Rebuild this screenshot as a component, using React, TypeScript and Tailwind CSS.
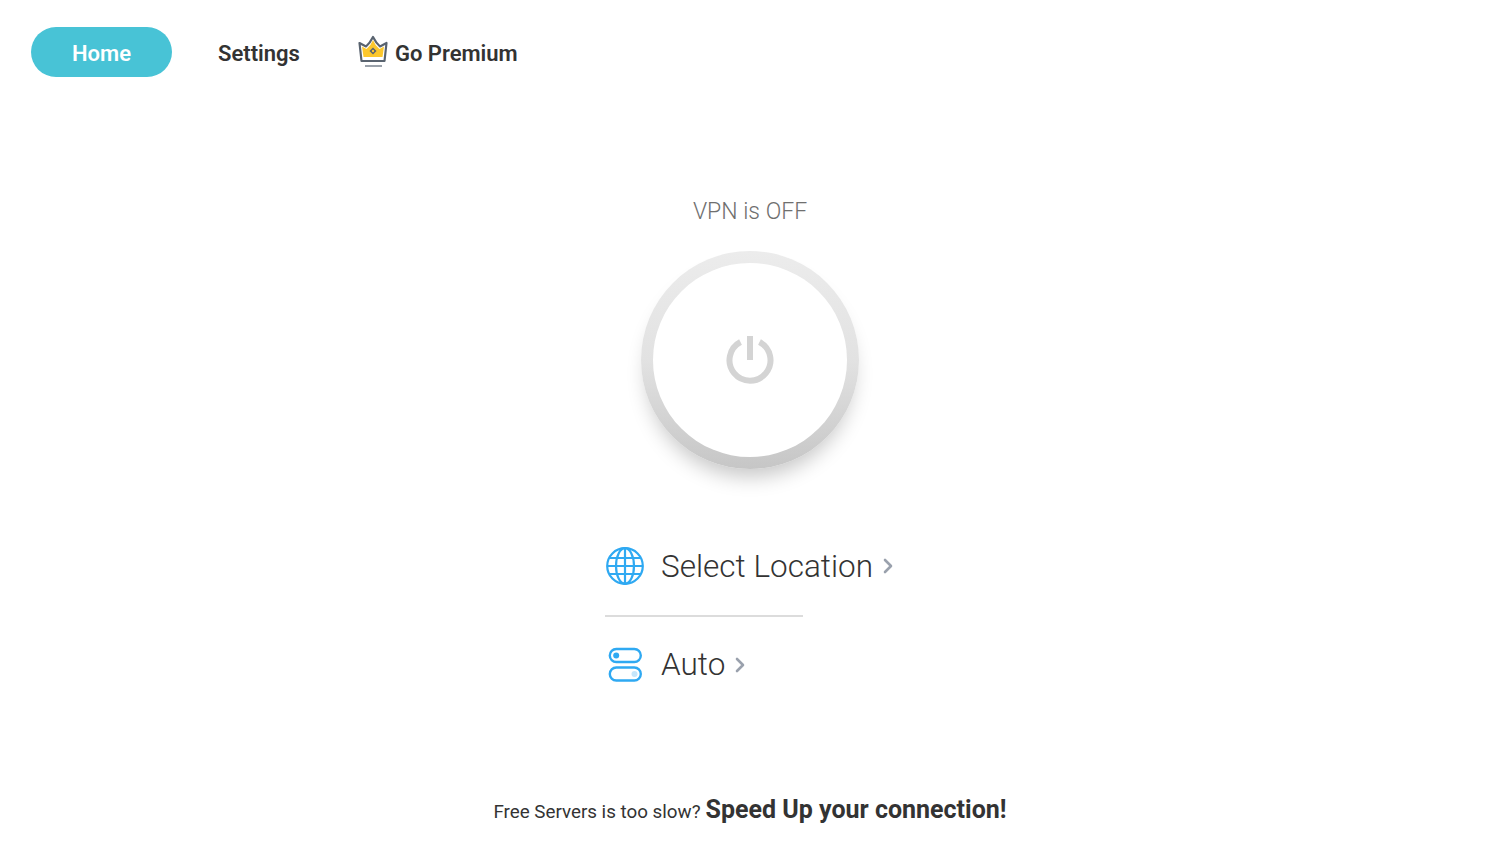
import { ChevronRight } from "lucide-react";

function CrownIcon() {
  return (
    <svg width="32" height="34" viewBox="0 0 32 34" fill="none" className="shrink-0">
      <path
        d="M2.5 8 L9 11.5 Q13 8 16 2 Q19 8 23 11.5 L29.5 8 L27.5 26 H4.5 Z"
        fill="#ffffff"
        stroke="#59636f"
        strokeWidth="2.2"
        strokeLinejoin="round"
      />
      <path d="M5 11.5 L9.5 14 Q14 10.5 16 5 Q18 10.5 22.5 14 L27 11.5 L25.5 22 H6.5 Z" fill="#fcc72c" />
      <path d="M8 31 H25" stroke="#9aa1aa" strokeWidth="2" />
      <path d="M16 12.5 L19.5 16 L16 19.5 L12.5 16 Z" fill="#59636f" />
      <circle cx="16" cy="16" r="1.2" fill="#fcc72c" />
    </svg>
  );
}

function PowerIcon() {
  return (
    <svg width="48" height="48" viewBox="0 0 48 48" fill="none" stroke="#d4d4d4">
      <path d="M14.5 6 A20.5 20.5 0 1 0 33.5 6" strokeWidth="6" />
      <path d="M24 0 V24" strokeWidth="6" />
    </svg>
  );
}

function GlobeIcon() {
  return (
    <svg width="40" height="40" viewBox="0 0 40 40" fill="none" stroke="#2fa9f2" strokeWidth="2.2" className="shrink-0">
      <circle cx="20" cy="20" r="17.8" />
      <ellipse cx="20" cy="20" rx="9" ry="17.8" />
      <path d="M20 2.2 V37.8 M2.2 20 H37.8 M4.5 12 H35.5 M4.5 28 H35.5" />
    </svg>
  );
}

function ServerIcon() {
  return (
    <svg width="40" height="40" viewBox="0 0 40 40" fill="none" className="shrink-0">
      <rect x="4.8" y="4" width="31" height="13" rx="6.5" stroke="#2fa9f2" strokeWidth="2.4" />
      <rect x="4.8" y="22.5" width="31" height="13" rx="6.5" stroke="#2fa9f2" strokeWidth="2.4" />
      <circle cx="11.2" cy="10.5" r="3" fill="#2fa9f2" />
      <circle cx="29.5" cy="29" r="3" fill="#c5e6fb" />
    </svg>
  );
}

export default function App() {
  return (
    <main className="h-[843px] bg-white flex flex-col text-[#333333] font-['Roboto',sans-serif] overflow-hidden">
      <nav className="flex items-center h-[50px] mt-[27px] ml-[31px]">
        <div className="w-[141px] h-[50px] rounded-full bg-[#48c3d6] text-white text-[22px] font-semibold flex items-center justify-center pt-[2px]">
          Home
        </div>
        <div className="ml-[46px] text-[22px] font-semibold pt-[2px]">Settings</div>
        <div className="ml-[57px] flex items-center">
          <CrownIcon />
          <span className="ml-[6px] text-[22px] font-semibold pt-[2px]">Go Premium</span>
        </div>
      </nav>

      <section className="flex flex-col items-center mt-[121px]">
        <div className="text-[23px] leading-[28px] font-light text-[#6f6f6f]">VPN is OFF</div>
        <div className="mt-[25px] w-[218px] h-[218px] rounded-full bg-gradient-to-b from-[#ececec] via-[#e2e2e2] to-[#c6c6c6] shadow-[0_14px_20px_-6px_rgba(0,0,0,0.22)] flex items-center justify-center">
          <div className="w-[194px] h-[194px] rounded-full bg-white flex items-center justify-center">
            <PowerIcon />
          </div>
        </div>

        <div className="mt-[77px] w-[294px] ml-[4px]">
          <div className="flex items-center h-[40px]">
            <GlobeIcon />
            <span className="ml-[16px] text-[31.5px] font-light text-[#333333] whitespace-nowrap pt-[2px]">Select Location</span>
            <ChevronRight className="ml-[3px] w-[24px] h-[24px] shrink-0 text-[#9aa1ad]" strokeWidth={2.6} />
          </div>
          <div className="mt-[29px] w-[198px] h-[2px] bg-[#dcdcdc]" />
          <div className="mt-[28px] flex items-center h-[40px]">
            <ServerIcon />
            <span className="ml-[16px] text-[31.5px] font-light text-[#333333]">Auto</span>
            <ChevronRight className="ml-[3px] w-[24px] h-[24px] shrink-0 text-[#9aa1ad]" strokeWidth={2.6} />
          </div>
        </div>
      </section>

      <footer className="mt-[106px] flex items-baseline justify-center">
        <span className="text-[18.8px]">Free Servers is too slow?</span>
        <span className="ml-[5px] text-[25px] font-bold">Speed Up your connection!</span>
      </footer>
    </main>
  );
}
